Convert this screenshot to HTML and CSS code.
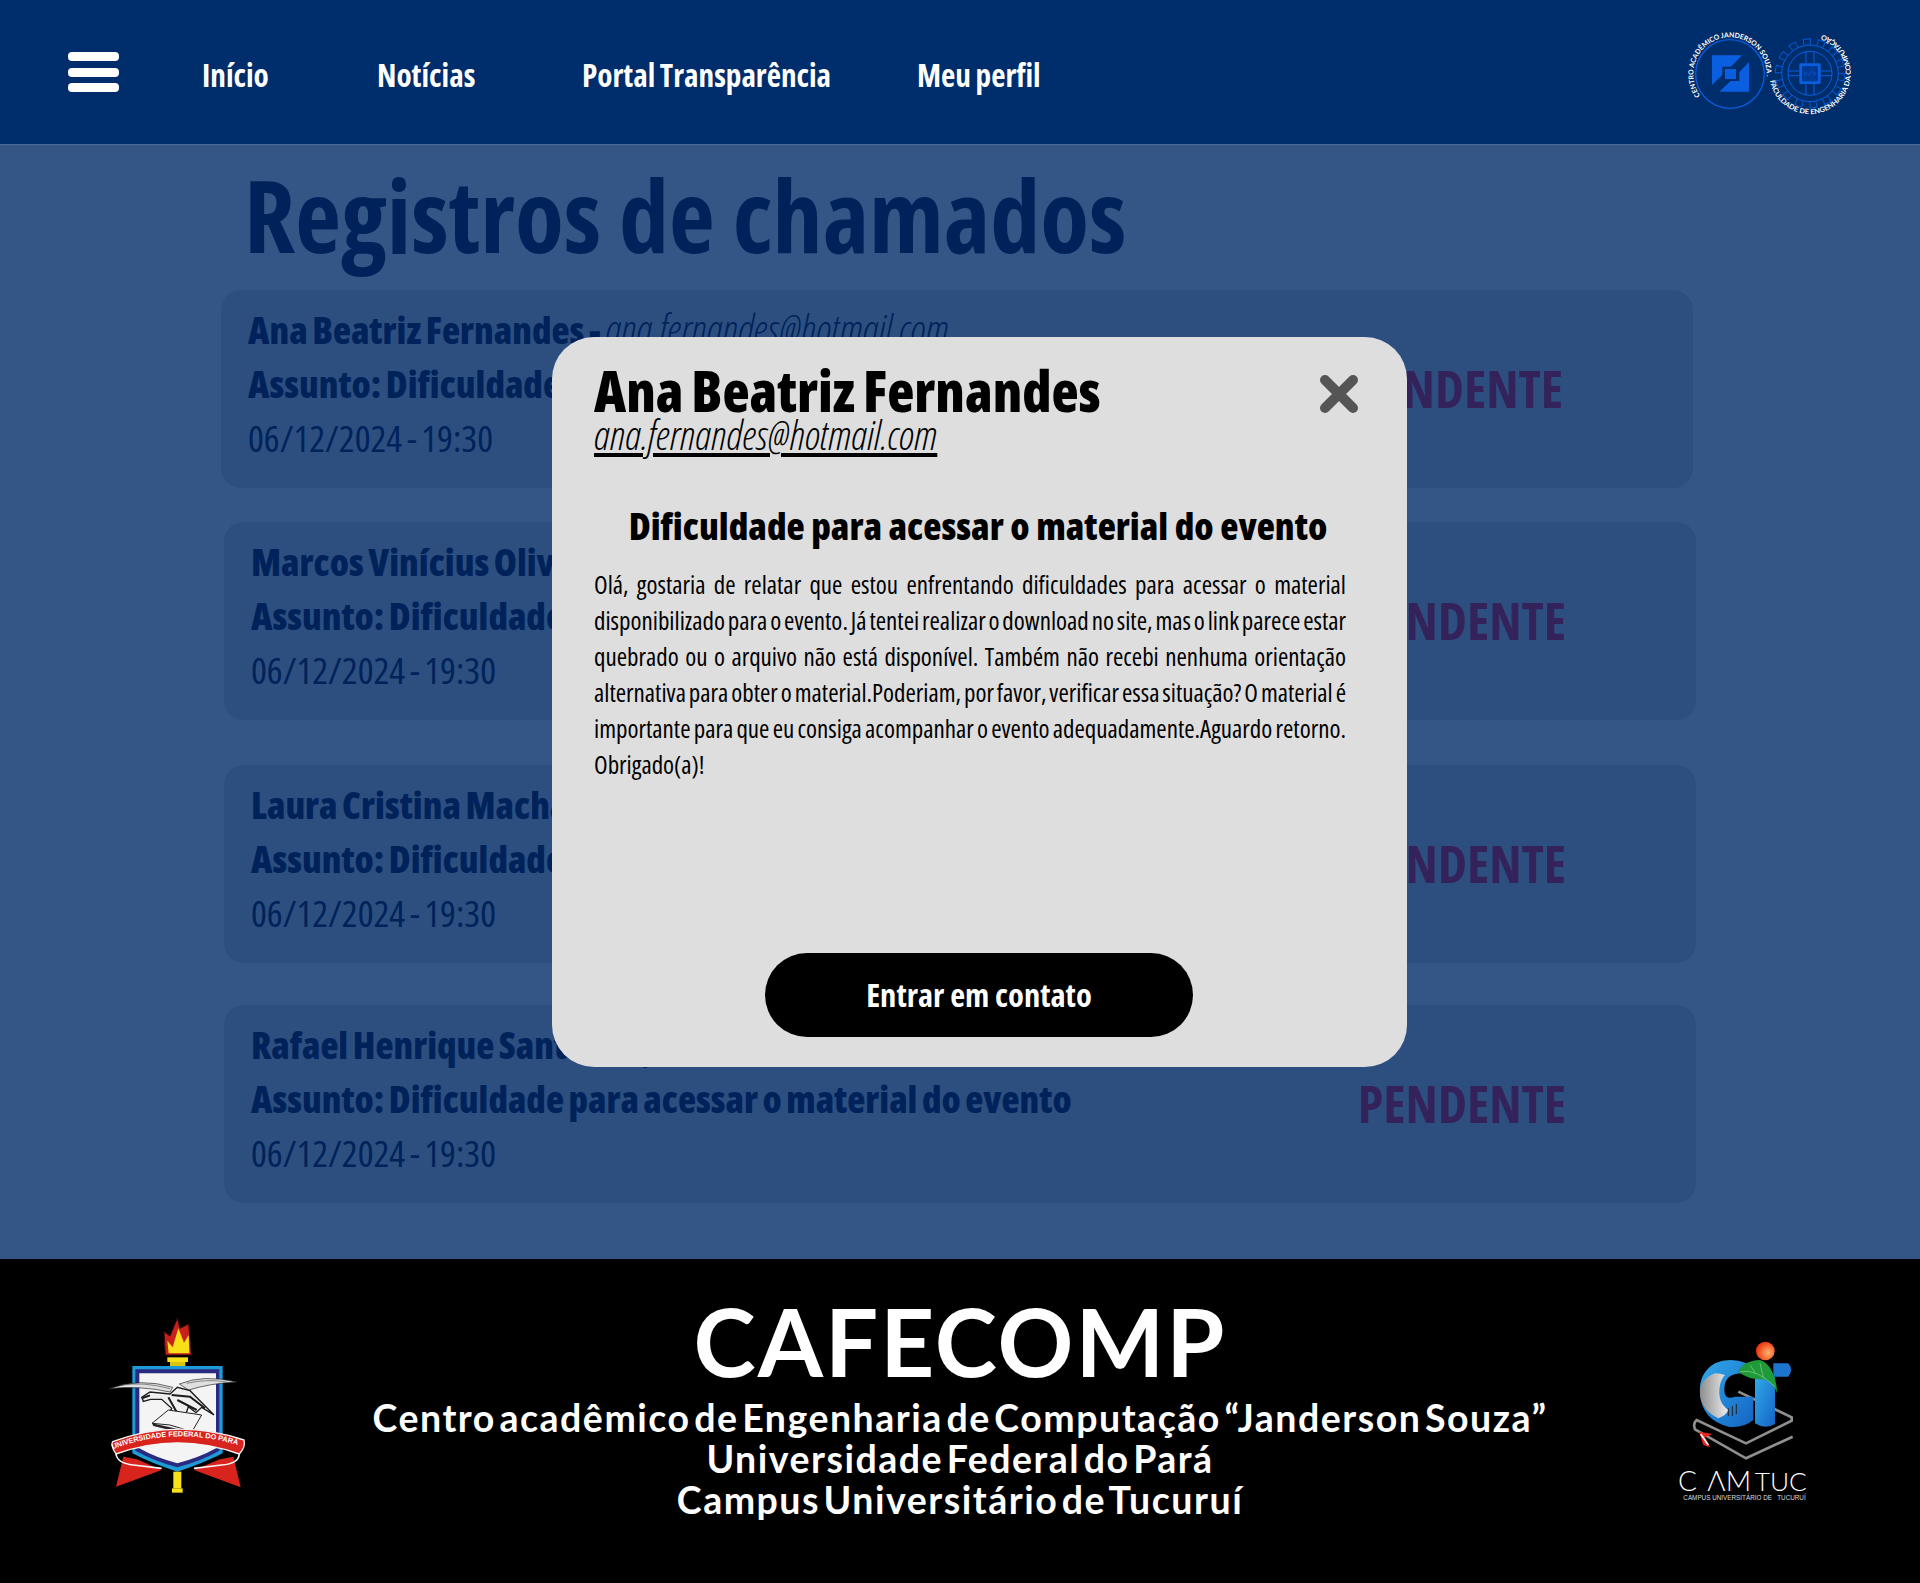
FILE: index.html
```html
<!DOCTYPE html>
<html lang="pt-BR">
<head>
    <meta charset="UTF-8">
    <meta name="viewport" content="width=device-width, initial-scale=1.0">
    <title>Registros de chamados</title>
    <link rel="stylesheet" href="styles.css">
</head>
<body>
    <div class="page">
        <header class="topbar">
            <button class="menu-btn" aria-label="Menu"><span></span><span></span><span></span></button>
            <nav class="nav">
                <a href="#">Início</a>
                <a href="#">Notícias</a>
                <a href="#">Portal Transparência</a>
                <a href="#">Meu perfil</a>
            </nav>
            <svg class="logo-top" viewBox="0 0 630 360">
                <defs>
                    <path id="arcLeft" d="M121 241.7 A110 110 0 1 1 319.2 190.4"/>
                    <path id="arcRight" d="M330 197 A122 122 0 1 0 480 57"/>
                </defs>
                <circle cx="210" cy="177" r="103" fill="none" stroke="#0a5fe0" stroke-width="4"/>
                <path d="M156 121H246L213 155H187V180L156 210Z" fill="#0a5fe0"/>
                <path d="M267 141V230H178L212 198H238V172Z" fill="#0a5fe0"/>
                <rect x="195" y="162" width="33" height="30" fill="#0a5fe0"/>
                <circle cx="450" cy="175" r="92" fill="none" stroke="#0a5fe0" stroke-width="26" stroke-dasharray="22 19.3"/>
                <circle cx="450" cy="175" r="92" fill="none" stroke="#002d6b" stroke-width="21" stroke-dasharray="17 24.3" stroke-dashoffset="-2.5"/>
                <circle cx="450" cy="175" r="85" fill="#002d6b" stroke="#0a5fe0" stroke-width="3"/>
                <circle cx="450" cy="175" r="66" fill="none" stroke="#0a5fe0" stroke-width="3"/>
                <path d="M384 168H418M384 182H418M482 168H516M482 182H516M438 110V145M462 110V145M438 207V240M462 207V240" fill="none" stroke="#0a5fe0" stroke-width="3"/>
                <rect x="418" y="145" width="64" height="62" rx="4" fill="#0a5fe0"/>
                <rect x="426" y="153" width="48" height="46" fill="#003a94"/>
                <text class="chip-text" x="450" y="182">&lt;/&gt;</text>
                <text class="ring-text"><textPath href="#arcLeft" textLength="422" lengthAdjust="spacingAndGlyphs">CENTRO ACADÊMICO JANDERSON SOUZA .</textPath></text>
                <text class="ring-text"><textPath href="#arcRight" textLength="515" lengthAdjust="spacingAndGlyphs">FACULDADE DE ENGENHARIA DA COMPUTAÇÃO</textPath></text>
            </svg>
        </header>

        <main class="content">
            <h1 class="page-title">Registros de chamados</h1>

            <article class="ticket ticket-first">
                <div>
                    <p class="ticket-name">Ana Beatriz Fernandes - <em>ana.fernandes@hotmail.com</em></p>
                    <p class="ticket-subject">Assunto: Dificuldade para acessar o material do evento</p>
                    <p class="ticket-date">06/12/2024 - 19:30</p>
                </div>
                <span class="ticket-status">PENDENTE</span>
            </article>
            <article class="ticket ticket-second">
                <div>
                    <p class="ticket-name">Marcos Vinícius Oliveira - <em>marcos.oliveira@hotmail.com</em></p>
                    <p class="ticket-subject">Assunto: Dificuldade para acessar o material do evento</p>
                    <p class="ticket-date">06/12/2024 - 19:30</p>
                </div>
                <span class="ticket-status">PENDENTE</span>
            </article>
            <article class="ticket ticket-third">
                <div>
                    <p class="ticket-name">Laura Cristina Machado - <em>laura.machado@hotmail.com</em></p>
                    <p class="ticket-subject">Assunto: Dificuldade para acessar o material do evento</p>
                    <p class="ticket-date">06/12/2024 - 19:30</p>
                </div>
                <span class="ticket-status">PENDENTE</span>
            </article>
            <article class="ticket ticket-fourth">
                <div>
                    <p class="ticket-name">Rafael Henrique Santos - <em>rafael.santos@hotmail.com</em></p>
                    <p class="ticket-subject">Assunto: Dificuldade para acessar o material do evento</p>
                    <p class="ticket-date">06/12/2024 - 19:30</p>
                </div>
                <span class="ticket-status">PENDENTE</span>
            </article>
        </main>

        <footer class="footer">
            <svg class="logo-ufpa" viewBox="0 0 540 630">
                <defs>
                    <path id="ribbonArc" d="M68 448 Q262 372 470 444"/>
                </defs>
                <path d="M262 55L270 85L296 72L304 165H226L222 95L240 108Z" fill="#c8201c" stroke="#3a0a08" stroke-width="3"/>
                <path d="M265 85L282 128L296 105L298 160H236L232 122L248 142Z" fill="#f7e017"/>
                <rect x="232" y="172" width="62" height="14" fill="#f7e017"/>
                <rect x="240" y="186" width="46" height="12" fill="#d9c312"/>
                <path d="M127 198H398V460Q340 490 262 515Q185 490 127 460Z" fill="#1e9bd7"/>
                <path d="M136 208H388V452Q335 482 262 502Q190 482 136 452Z" fill="#2a2a80"/>
                <path d="M148 220H378V445Q330 472 262 490Q195 472 148 445Z" fill="#f4f4f4"/>
                <path d="M58 266Q150 232 248 262L240 276Q150 256 58 266Z" fill="#e0e0e0" stroke="#222" stroke-width="2"/>
                <path d="M268 252Q340 222 440 246Q360 250 296 270Z" fill="#e0e0e0" stroke="#222" stroke-width="2"/>
                <path d="M90 256Q160 244 240 266M290 250Q350 236 410 246" fill="none" stroke="#555" stroke-width="2"/>
                <path d="M155 292L180 276L240 282L262 262L300 272L372 345L335 322L318 338L295 320L285 350L262 345L228 355L245 325L215 298L182 298L160 304Z" fill="#f0f0f0" stroke="#1c1c1c" stroke-width="4"/>
                <path d="M245 285L300 290L345 325M262 300L320 330M235 292L262 340M158 294L180 286" fill="none" stroke="#1c1c1c" stroke-width="6"/>
                <path d="M186 370L235 330L335 345L306 395L240 375Z" fill="#f4f4f4" stroke="#222" stroke-width="3"/>
                <path d="M186 370L240 382L306 396L303 405L240 390L190 378Z" fill="#222"/>
                <path d="M78 560L215 510L140 478L100 470Z" fill="#d9241e"/>
                <path d="M452 562L312 510L390 478L430 470Z" fill="#d9241e"/>
                <path d="M78 462Q60 435 68 425Q262 352 462 420Q468 440 448 462Q262 395 78 462Z" fill="#d9241e" stroke="#f4f4f4" stroke-width="4"/>
                <path d="M78 462Q82 490 130 495L215 505M448 462Q445 492 395 495L312 505" fill="none" stroke="#f4f4f4" stroke-width="5"/>
                <text class="ribbon-text"><textPath href="#ribbonArc">UNIVERSIDADE FEDERAL DO PARÁ</textPath></text>
                <rect x="250" y="515" width="24" height="50" fill="#f7e017"/>
                <rect x="246" y="565" width="32" height="13" fill="#f7e017"/>
            </svg>

            <div class="footer-text">
                <h2 class="footer-title">CAFECOMP</h2>
                <p>Centro acadêmico de Engenharia de Computação “Janderson Souza”</p>
                <p>Universidade Federal do Pará</p>
                <p>Campus Universitário de Tucuruí</p>
            </div>

            <svg class="logo-camtuc" viewBox="0 0 480 540">
                <defs>
                    <radialGradient id="ball" cx="0.65" cy="0.6" r="0.6">
                        <stop offset="0" stop-color="#ffb36b"/>
                        <stop offset="1" stop-color="#ee3a12"/>
                    </radialGradient>
                    <linearGradient id="blueG" x1="0" y1="0" x2="1" y2="1">
                        <stop offset="0" stop-color="#31a9ea"/>
                        <stop offset="1" stop-color="#1464c4"/>
                    </linearGradient>
                    <linearGradient id="greyG" x1="0" y1="0" x2="1" y2="0">
                        <stop offset="0" stop-color="#8d8d8d"/>
                        <stop offset="1" stop-color="#eeeeee"/>
                    </linearGradient>
                </defs>
                <path d="M235 185L395 262V272L258 340L110 270Q98 280 105 298L258 385L398 320" fill="none" stroke="#8f8f8f" stroke-width="8"/>
                <path d="M260 100Q210 80 165 100Q115 130 120 190Q125 270 205 290Q250 295 280 270V200H225Q185 215 195 160Q205 125 260 130Z" fill="url(#blueG)"/>
                <path d="M165 130Q115 150 120 195Q125 240 175 265Q200 255 205 240Q170 215 180 165Q185 145 195 135Q180 130 165 130Z" fill="url(#greyG)"/>
                <path d="M205 235V258M217 228V258M229 222V252" stroke="#222" stroke-width="3"/>
                <path d="M285 140H345V282Q315 300 285 280Z" fill="url(#blueG)"/>
                <path d="M340 100H385Q402 118 385 140H340Z" fill="#1e75d0"/>
                <path d="M235 125Q250 92 300 90Q345 105 352 190Q340 160 315 148Q265 150 235 125Z" fill="#1f9a3a"/>
                <path d="M240 125Q290 115 345 170M270 105L285 128M300 100L310 142" fill="none" stroke="#8fd18a" stroke-width="2"/>
                <circle cx="316" cy="63" r="28" fill="url(#ball)"/>
                <path d="M117 305L158 312L135 322L150 352L130 345Z" fill="#e8241e"/>
                <path d="M122 312L145 345" stroke="#fff" stroke-width="5"/>
                <text class="camtuc-name" x="54" y="482">C</text>
                <text class="camtuc-name" x="142" y="482">ΛM</text>
                <text class="camtuc-name camtuc-tuc" x="284" y="482">TUC</text>
                <text class="camtuc-small" x="70" y="510">CAMPUS UNIVERSITÁRIO DE &#160;&#160;TUCURUÍ</text>
            </svg>
        </footer>

        <div class="modal">
            <button class="modal-close" aria-label="Fechar">
                <svg viewBox="0 0 38 38"><path d="M5 5L33 33M33 5L5 33"/></svg>
            </button>
            <h2 class="modal-name">Ana Beatriz Fernandes</h2>
            <a class="modal-email" href="#">ana.fernandes@hotmail.com</a>
            <h3 class="modal-subject">Dificuldade para acessar o material do evento</h3>
            <p class="modal-body">Olá, gostaria de relatar que estou enfrentando dificuldades para acessar o material disponibilizado para o evento. Já tentei realizar o download no site, mas o link parece estar quebrado ou o arquivo não está disponível. Também não recebi nenhuma orientação alternativa para obter o material.Poderiam, por favor, verificar essa situação? O material é importante para que eu consiga acompanhar o evento adequadamente.Aguardo retorno. Obrigado(a)!</p>
            <button class="modal-btn">Entrar em contato</button>
        </div>
    </div>
</body>
</html>
```

FILE: styles.css
```css
* { box-sizing: border-box; margin: 0; padding: 0; }
body { font-family: "Open Sans", "Liberation Sans", sans-serif; font-stretch: 75%; background: #345686; }
button { font-family: inherit; font-stretch: inherit; border: none; cursor: pointer; }
.page { position: relative; width: 1920px; height: 1583px; display: flex; flex-direction: column; overflow: hidden; }

.topbar { height: 145px; background: #002d6b; border-bottom: 1px solid #4d6b96; display: flex; align-items: center; padding: 0 50px 0 68px; flex-shrink: 0; }
.menu-btn { width: 51px; height: 40px; background: none; display: flex; flex-direction: column; justify-content: space-between; flex-shrink: 0; }
.menu-btn span { display: block; height: 9px; background: #fff; border-radius: 4px; }
.nav { display: grid; grid-template-columns: 175px 205px 335px auto; margin-left: 83px; margin-top: 6px; }
.nav a { color: #fff; font-size: 31.2px; font-weight: 700; text-decoration: none; word-spacing: -1px; }
.logo-top { width: 210px; height: 120px; margin-left: auto; margin-top: 6px; }
.ring-text { font-family: "Lato", sans-serif; font-stretch: normal; font-size: 21px; font-weight: 700; fill: #fff; }
.chip-text { font-family: "Liberation Mono", monospace; font-size: 22px; fill: #0a5fe0; text-anchor: middle; }

.content { flex: 1; padding-left: 221px; padding-top: 1px; }
.page-title { font-size: 100px; font-weight: 700; color: #00225a; line-height: 136px; margin-left: 23px; }
.ticket { width: 1472px; height: 198px; background: #2c4f80; border-radius: 20px; padding: 12px 130px 0 27px; display: flex; justify-content: space-between; align-items: flex-start; color: #00225a; }
.ticket-first { margin-top: 8px; }
.ticket-second { margin-top: 34px; margin-left: 3px; }
.ticket-third { margin-top: 45px; margin-left: 3px; }
.ticket-fourth { margin-top: 42px; margin-left: 3px; }
.ticket p { font-size: 37.3px; line-height: 54px; white-space: nowrap; word-spacing: -2px; }
.ticket-name, .ticket-subject { font-weight: 800; }
.ticket-name em { font-weight: 300; font-size: 40.3px; word-spacing: 0; }
.ticket p.ticket-date { font-weight: 400; word-spacing: -2.5px; }
.ticket-status { font-size: 52px; font-weight: 700; color: #34235a; line-height: 70px; margin-top: 51px; }

.footer { height: 324px; background: #000; display: grid; grid-template-columns: 270px 1fr 260px; flex-shrink: 0; color: #fff; }
.logo-ufpa { width: 180px; height: 210px; margin: 41px 0 0 90px; }
.logo-camtuc { width: 160px; height: 180px; margin-top: 71px; }
.footer-text { text-align: center; padding: 26px 10px 0 0; font-family: "Lato", sans-serif; font-stretch: normal; }
.footer-title { font-size: 94px; font-weight: 700; line-height: 112px; letter-spacing: 2px; }
.footer-text p { font-size: 37.5px; font-weight: 700; line-height: 41px; letter-spacing: 1.5px; word-spacing: -7px; }
.ribbon-text { font-family: "Liberation Sans", sans-serif; font-stretch: normal; font-size: 22px; font-weight: 700; fill: #fff; }
.camtuc-name { font-family: "Lato", sans-serif; font-stretch: normal; font-weight: 300; font-size: 84px; fill: #fff; }
.camtuc-tuc { font-size: 79px; }
.camtuc-small { font-family: "Liberation Sans", sans-serif; font-stretch: normal; font-size: 19px; fill: #ddd; }

.modal { position: absolute; left: 552px; top: 337px; width: 855px; height: 730px; background: #dedede; border-radius: 42px; padding: 18px 61px 0 42px; color: #000; }
.modal-close { position: absolute; left: 768px; top: 38px; width: 38px; height: 38px; background: none; }
.modal-close svg { display: block; width: 38px; height: 38px; }
.modal-close path { fill: none; stroke: #555; stroke-width: 10; stroke-linecap: round; }
.modal-name { font-size: 56px; font-weight: 800; line-height: 70px; word-spacing: -2px; }
.modal-email { display: block; font-size: 40.3px; font-style: italic; font-weight: 300; line-height: 40px; margin-top: -10px; color: #000; }
.modal-subject { font-size: 37.5px; font-weight: 800; line-height: 50px; text-align: center; margin-top: 46px; padding-left: 16px; }
.modal-body { font-size: 25px; line-height: 36px; text-align: justify; margin-top: 15px; word-spacing: -4px; }
.modal-btn { position: absolute; left: 213px; top: 616px; width: 428px; height: 84px; border-radius: 42px; background: #000; color: #fff; font-size: 32.5px; font-weight: 700; padding-bottom: 2px; }
```
